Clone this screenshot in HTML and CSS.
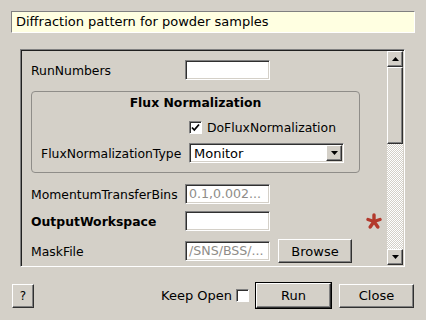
FILE: index.html
```html
<!DOCTYPE html>
<html lang="en">
<head>
  <meta charset="UTF-8">
  <title>Diffraction pattern for powder samples</title>
  <link rel="stylesheet" href="styles.css">
</head>
<body>
  <div class="dialog">
    <div class="summary">Diffraction pattern for powder samples</div>

    <div class="frame">
      <div class="props">
        <div class="row">
          <span class="lbl">RunNumbers</span>
          <span class="field"></span>
        </div>

        <div class="group">
          <div class="group-title">Flux Normalization</div>
          <div class="check-row">
            <span class="box">
              <svg width="11" height="11" viewBox="0 0 11 11"><path d="M2 5.5 L4.3 8 L9 2.5" fill="none" stroke="#000" stroke-width="1.8"/></svg>
            </span>
            <span>DoFluxNormalization</span>
          </div>
          <div class="combo-row">
            <span class="glbl">FluxNormalizationType</span>
            <div class="combo">
              <span class="combo-text">Monitor</span>
              <span class="combo-btn">
                <svg width="7" height="4" viewBox="0 0 7 4"><path d="M0 0 H7 L3.5 4 Z" fill="#000"/></svg>
              </span>
            </div>
          </div>
        </div>

        <div class="row row-bins">
          <span class="lbl">MomentumTransferBins</span>
          <span class="field"><span class="hint">0.1,0.002...</span></span>
        </div>

        <div class="row row-out">
          <span class="lbl bold">OutputWorkspace</span>
          <span class="field"></span>
          <svg class="required" width="16" height="16" viewBox="0 0 16 16">
            <g stroke="#b3392c" stroke-width="3.4" stroke-linecap="round">
              <line x1="8" y1="8.5" x2="8" y2="2"/>
              <line x1="8" y1="8.5" x2="14" y2="6.5"/>
              <line x1="8" y1="8.5" x2="2" y2="6.5"/>
              <line x1="8" y1="8.5" x2="11.8" y2="14"/>
              <line x1="8" y1="8.5" x2="4.2" y2="14"/>
            </g>
          </svg>
        </div>

        <div class="row row-mask">
          <span class="lbl">MaskFile</span>
          <span class="field"><span class="hint">/SNS/BSS/...</span></span>
          <span class="btn browse">Browse</span>
        </div>
      </div>

      <div class="vscroll">
        <span class="sbtn">
          <svg width="7" height="4" viewBox="0 0 7 4"><path d="M0 4 H7 L3.5 0 Z" fill="#000"/></svg>
        </span>
        <span class="handle"></span>
        <span class="trough"></span>
        <span class="sbtn">
          <svg width="7" height="4" viewBox="0 0 7 4"><path d="M0 0 H7 L3.5 4 Z" fill="#000"/></svg>
        </span>
      </div>
    </div>

    <div class="footer">
      <span class="btn help">?</span>
      <span class="spacer"></span>
      <span class="keep">Keep Open</span>
      <span class="box keep-box"></span>
      <span class="default-wrap"><span class="btn run">Run</span></span>
      <span class="btn close">Close</span>
    </div>
  </div>
</body>
</html>
```

FILE: styles.css
```css
body {
  margin: 0;
  width: 426px;
  height: 320px;
  overflow: hidden;
  background: #d4d0c8;
  font-family: "DejaVu Sans", sans-serif;
  font-size: 12.4px;
  color: #000;
}

.dialog {
  padding-top: 11px;
}

.summary {
  margin-left: 11px;
  width: 404px;
  height: 22px;
  box-sizing: border-box;
  padding-left: 4px;
  line-height: 20px;
  font-size: 13px;
  background: #ffffe1;
  border: 1px solid;
  border-color: #808080 #ffffff #ffffff #808080;
}

/* scroll area with the properties */
.frame {
  margin-top: 16px;
  margin-left: 20px;
  width: 385px;
  height: 218px;
  box-sizing: border-box;
  border: 1px solid;
  border-color: #808080 #ffffff #ffffff #808080;
  box-shadow: inset 1px 1px #202020, inset -1px -1px #d4d0c8;
  padding: 1px;
  display: flex;
}

.props {
  flex: 1;
  overflow: hidden;
  padding: 9px 0 0 9px;
}

.row {
  display: flex;
  align-items: center;
  height: 20px;
}

.lbl {
  width: 154px;
  flex: none;
}

.bold {
  font-weight: bold;
}

.field {
  width: 85px;
  height: 20px;
  flex: none;
  box-sizing: border-box;
  background: #fff;
  border: 1px solid;
  border-color: #808080 #ffffff #ffffff #808080;
  box-shadow: inset 1px 1px #303030, inset -1px -1px #d4d0c8;
  padding-left: 3px;
  line-height: 18px;
  font-size: 12.6px;
  overflow: hidden;
  white-space: nowrap;
}

.hint {
  color: #8e8c88;
}

.group {
  margin-top: 11px;
  width: 329px;
  height: 82px;
  box-sizing: border-box;
  border: 1px solid #8f8d89;
  border-radius: 4px;
  padding: 4px 0 0 9px;
}

.group-title {
  text-align: center;
  font-weight: bold;
  line-height: 14px;
  margin-left: -9px;
}

.check-row {
  display: flex;
  align-items: center;
  gap: 5px;
  margin-top: 10px;
  margin-left: 148px;
  height: 14px;
}

.box {
  width: 13px;
  height: 13px;
  box-sizing: border-box;
  background: #fff;
  border: 1px solid;
  border-color: #808080 #ffffff #ffffff #808080;
  box-shadow: inset 1px 1px #303030;
  display: flex;
  align-items: center;
  justify-content: center;
}

.combo-row {
  display: flex;
  align-items: center;
  margin-top: 9px;
  height: 20px;
}

.glbl {
  width: 148px;
}

.combo {
  width: 155px;
  height: 20px;
  box-sizing: border-box;
  background: #fff;
  border: 1px solid;
  border-color: #808080 #ffffff #ffffff #808080;
  box-shadow: inset 1px 1px #303030, inset -1px -1px #d4d0c8;
  padding: 1px;
  display: flex;
  align-items: center;
}

.combo-text {
  flex: 1;
  padding-left: 3px;
  font-size: 13px;
}

.combo-btn,
.sbtn {
  width: 16px;
  height: 16px;
  box-sizing: border-box;
  background: #d4d0c8;
  border: 1px solid;
  border-color: #ffffff #303030 #303030 #ffffff;
  box-shadow: inset -1px -1px #808080;
  display: flex;
  align-items: center;
  justify-content: center;
  flex: none;
}

.row-bins {
  margin-top: 11px;
}

.row-out {
  margin-top: 7px;
}

.required {
  margin-left: 96px;
}

.row-mask {
  margin-top: 8px;
  height: 24px;
}

.btn {
  box-sizing: border-box;
  background: #d4d0c8;
  border: 1px solid;
  border-color: #ffffff #303030 #303030 #ffffff;
  box-shadow: inset -1px -1px #808080;
  display: flex;
  align-items: center;
  justify-content: center;
  font-size: 13px;
}

.browse {
  margin-left: 8px;
  width: 74px;
  height: 24px;
}

/* vertical scroll bar */
.vscroll {
  width: 16px;
  display: flex;
  flex-direction: column;
}

.handle {
  height: 77px;
  box-sizing: border-box;
  background: #d4d0c8;
  border: 1px solid;
  border-color: #ffffff #303030 #303030 #ffffff;
  box-shadow: inset -1px -1px #808080;
}

.trough {
  flex: 1;
  background: repeating-conic-gradient(#ffffff 0 25%, #d4d0c8 0 50%) 0 0 / 2px 2px;
}

/* buttons at the bottom */
.footer {
  margin-top: 15px;
  height: 27px;
  padding: 0 12px;
  display: flex;
  align-items: center;
}

.help {
  width: 22px;
  height: 24px;
  font-size: 12px;
}

.spacer {
  flex: 1;
}

.keep {
  font-size: 13px;
}

.keep-box {
  margin-left: 4px;
}

.default-wrap {
  margin-left: 6px;
  border: 1px solid #000;
}

.run {
  width: 75px;
  height: 25px;
}

.close {
  margin-left: 7px;
  width: 75px;
  height: 24px;
}
```
